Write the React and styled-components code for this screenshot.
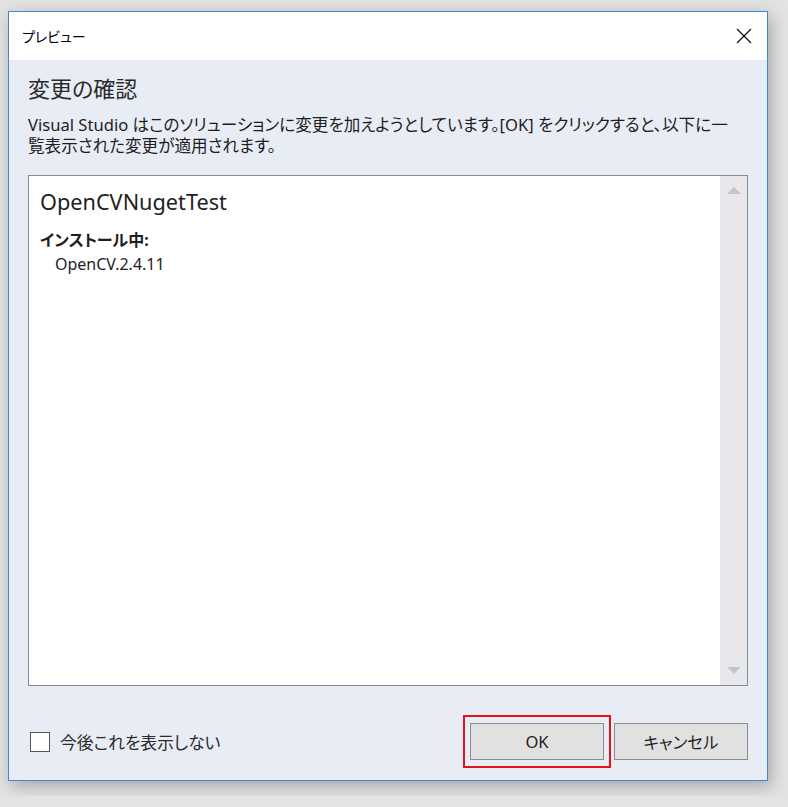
import styled, { createGlobalStyle } from 'styled-components';

const GlobalStyle = createGlobalStyle`
    body {
        margin: 0;
        background: #e3e3e3;
        font-family: "Noto Sans", "Noto Sans CJK JP", sans-serif;
        font-feature-settings: "palt";
        color: #1e1e1e;
    }
`

const Page = styled.div`
    padding: 11px 0 0 8px;
    height: 796px;
    box-sizing: border-box;
`

const Dialog = styled.div`
    width: 760px;
    height: 770px;
    box-sizing: border-box;
    border: 1px solid #3f89d3;
    background: #e8ecf5;
    box-shadow: 3px 5px 16px rgba(0, 0, 0, 0.28);
    display: flex;
    flex-direction: column;
`

const TitleBar = styled.div`
    height: 48px;
    background: #ffffff;
    display: flex;
    align-items: center;
    justify-content: space-between;
    padding: 0 15px 0 13px;
    font-size: 14px;
    color: #000;
`

const Body = styled.div`
    flex: 1;
    display: flex;
    flex-direction: column;
    padding: 0 19px;
`

const Heading = styled.div`
    margin-top: 14px;
    font-size: 22px;
    line-height: 28px;
    color: #2a2a2a;
`

const Description = styled.div`
    margin-top: 12px;
    font-size: 16.6px;
    line-height: 21px;
    white-space: nowrap;
`

const ListBox = styled.div`
    margin-top: 19px;
    height: 511px;
    box-sizing: border-box;
    border: 1px solid #858b94;
    background: #ffffff;
    display: flex;
`

const ListContent = styled.div`
    flex: 1;
    padding: 12px 11px;
`

const ProjectName = styled.div`
    font-size: 21.7px;
    line-height: 28px;
    color: #222;
`

const SectionLabel = styled.div`
    margin-top: 14px;
    font-size: 16px;
    font-weight: bold;
    line-height: 20px;
`

const PackageItem = styled.div`
    margin-top: 2px;
    padding-left: 15px;
    font-size: 16px;
    line-height: 24px;
`

const ScrollTrack = styled.div`
    width: 27px;
    background: #e8e8ec;
    display: flex;
    flex-direction: column;
    justify-content: space-between;
    align-items: center;
    padding: 11px 0;
`

const Footer = styled.div`
    margin-top: 37px;
    height: 37px;
    display: flex;
    align-items: center;
`

const CheckRow = styled.label`
    display: flex;
    align-items: center;
    flex: 1;
    font-size: 16.8px;
    color: #2a2a2a;
`

const CheckBox = styled.span`
    width: 20px;
    height: 20px;
    box-sizing: border-box;
    margin-left: 2px;
    margin-right: 10px;
    border: 1px solid #555;
    background: #fff;
`

const Highlight = styled.div`
    position: relative;

    &::after {
        content: "";
        position: absolute;
        top: -8px;
        bottom: -8px;
        left: -7px;
        right: -7px;
        border: 2px solid #e0121a;
        pointer-events: none;
    }
`

const Button = styled.button`
    width: 134px;
    height: 37px;
    margin-left: ${({ gap }) => gap || 0}px;
    border: 1px solid #8c8c8c;
    background: #e1e1e1;
    font-family: inherit;
    font-feature-settings: "palt";
    font-size: 16.5px;
    color: #1e1e1e;
    padding: 0;
`

const Arrow = ({ down }) => (
    <svg width="14" height="7" viewBox="0 0 14 7">
        <polygon points={down ? "0,0 14,0 7,7" : "0,7 14,7 7,0"} fill="#c4c5cb" />
    </svg>
)

function App() {
    return (
        <Page>
            <GlobalStyle />
            <Dialog>
                <TitleBar>
                    <span>プレビュー</span>
                    <svg width="16" height="16" viewBox="0 0 16 16">
                        <path d="M1 1 L15 15 M15 1 L1 15" stroke="#111" strokeWidth="1.3" />
                    </svg>
                </TitleBar>
                <Body>
                    <Heading>変更の確認</Heading>
                    <Description>
                        Visual Studio はこのソリューションに変更を加えようとしています。[OK] をクリックすると、以下に一<br />
                        覧表示された変更が適用されます。
                    </Description>
                    <ListBox>
                        <ListContent>
                            <ProjectName>OpenCVNugetTest</ProjectName>
                            <SectionLabel>インストール中:</SectionLabel>
                            <PackageItem>OpenCV.2.4.11</PackageItem>
                        </ListContent>
                        <ScrollTrack>
                            <Arrow />
                            <Arrow down />
                        </ScrollTrack>
                    </ListBox>
                    <Footer>
                        <CheckRow>
                            <CheckBox />
                            今後これを表示しない
                        </CheckRow>
                        <Highlight>
                            <Button>OK</Button>
                        </Highlight>
                        <Button gap={10}>キャンセル</Button>
                    </Footer>
                </Body>
            </Dialog>
        </Page>
    )
}

export default App;
